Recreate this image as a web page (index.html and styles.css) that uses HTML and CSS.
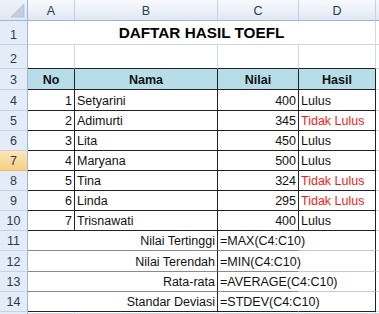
FILE: index.html
```html
<!DOCTYPE html>
<html>
<head>
<meta charset="utf-8">
<link rel="stylesheet" href="styles.css">
</head>
<body>
<div class="sheet">
  <!-- column headers -->
  <div class="corner"><svg width="27" height="20" viewBox="0 0 27 20"><polygon points="11,17 24,17 24,4" fill="#c3cfdf" stroke="#a9b9cf" stroke-width="0.6"/></svg></div>
  <div class="ch">A</div>
  <div class="ch">B</div>
  <div class="ch">C</div>
  <div class="ch">D</div>
  <div class="ch ch-x"></div>

  <!-- row 1 -->
  <div class="rh">1</div>
  <div class="c title">DAFTAR HASIL TOEFL</div>
  <div class="c x"></div>

  <!-- row 2 -->
  <div class="rh">2</div>
  <div class="c top"></div>
  <div class="c top"></div>
  <div class="c top"></div>
  <div class="c top t-r"></div>
  <div class="c x"></div>

  <!-- row 3 -->
  <div class="rh">3</div>
  <div class="c t th">No</div>
  <div class="c t th">Nama</div>
  <div class="c t th">Nilai</div>
  <div class="c t th">Hasil</div>
  <div class="c x"></div>

  <div class="rh">4</div>
  <div class="c t num">1</div>
  <div class="c t txt">Setyarini</div>
  <div class="c t num">400</div>
  <div class="c t txt">Lulus</div>
  <div class="c x"></div>

  <div class="rh">5</div>
  <div class="c t num">2</div>
  <div class="c t txt">Adimurti</div>
  <div class="c t num">345</div>
  <div class="c t txt fail">Tidak Lulus</div>
  <div class="c x"></div>

  <div class="rh">6</div>
  <div class="c t num">3</div>
  <div class="c t txt">Lita</div>
  <div class="c t num">450</div>
  <div class="c t txt">Lulus</div>
  <div class="c x"></div>

  <div class="rh rh-sel">7</div>
  <div class="c t num">4</div>
  <div class="c t txt">Maryana</div>
  <div class="c t num">500</div>
  <div class="c t txt">Lulus</div>
  <div class="c x"></div>

  <div class="rh">8</div>
  <div class="c t num">5</div>
  <div class="c t txt">Tina</div>
  <div class="c t num">324</div>
  <div class="c t txt fail">Tidak Lulus</div>
  <div class="c x"></div>

  <div class="rh">9</div>
  <div class="c t num">6</div>
  <div class="c t txt">Linda</div>
  <div class="c t num">295</div>
  <div class="c t txt fail">Tidak Lulus</div>
  <div class="c x"></div>

  <div class="rh">10</div>
  <div class="c t num">7</div>
  <div class="c t txt">Trisnawati</div>
  <div class="c t num">400</div>
  <div class="c t txt">Lulus</div>
  <div class="c x"></div>

  <div class="rh">11</div>
  <div class="c lab">Nilai Tertinggi</div>
  <div class="c fx">=MAX(C4:C10)</div>
  <div class="c fd"></div>
  <div class="c x"></div>

  <div class="rh">12</div>
  <div class="c lab">Nilai Terendah</div>
  <div class="c fx">=MIN(C4:C10)</div>
  <div class="c fd"></div>
  <div class="c x"></div>

  <div class="rh">13</div>
  <div class="c lab">Rata-rata</div>
  <div class="c fx">=AVERAGE(C4:C10)</div>
  <div class="c fd"></div>
  <div class="c x"></div>

  <div class="rh">14</div>
  <div class="c lab last">Standar Deviasi</div>
  <div class="c fx last">=STDEV(C4:C10)</div>
  <div class="c fd last"></div>
  <div class="c x"></div>

  <div class="rh rh-end"></div>
  <div class="c"></div>
  <div class="c"></div>
  <div class="c"></div>
  <div class="c"></div>
  <div class="c x"></div>
</div>
</body>
</html>
```

FILE: styles.css
```css
* { box-sizing: border-box; }
html, body { margin: 0; padding: 0; background: #fff; }
body {
  font-family: "Liberation Sans", Arial, sans-serif;
  font-size: 12.5px;
  color: #111;
  overflow: hidden;
}
.sheet {
  display: grid;
  grid-template-columns: 28px 47px 143px 81px 77px 1fr;
  grid-template-rows: 21px 24px 24px 21px 21px repeat(7, 20px) 21px 20px 20px 1fr;
  width: 379px;
  height: 314px;
}
.corner {
  background: linear-gradient(#eef3fa, #dfe7f2);
  border-right: 1px solid #9eb6ce;
  border-bottom: 1px solid #9eb6ce;
  display: flex;
}
.ch {
  background: linear-gradient(#f7f9fc 0%, #edf2f9 50%, #dfe7f2 100%);
  border-right: 1px solid #c5d2e3;
  border-bottom: 1px solid #9eb6ce;
  display: flex;
  align-items: center;
  justify-content: center;
  color: #2c3a4f;
  padding-top: 1px;
}
.ch-x { border-right: none; }
.rh {
  background: #e4ecf7;
  border-right: 1px solid #9eb6ce;
  border-bottom: 1px solid #c5d2e3;
  display: flex;
  align-items: flex-end;
  justify-content: center;
  line-height: 15px;
  padding-bottom: 1px;
  color: #2c3a4f;
}
.rh-sel {
  background: linear-gradient(#fde6b8, #f9cf87);
  border-bottom-color: #f0b45e;
}
.rh-end { border-bottom: none; }
.c {
  border-right: 1px solid #d0d7e5;
  border-bottom: 1px solid #d0d7e5;
  display: flex;
  align-items: flex-end;
  line-height: 15px;
  padding: 0 2px 1px;
  white-space: nowrap;
  background: #fff;
}
.x { border-right: none; }
.title {
  grid-column: span 4;
  justify-content: center;
  font-weight: bold;
  font-size: 15.3px;
  line-height: 18px;
  padding-bottom: 2px;
  color: #000;
}
.top { border-bottom-color: #222; }
.t { border-right-color: #222; border-bottom-color: #222; }
.th {
  background: #b7dee8;
  font-weight: bold;
  justify-content: center;
}
.num { justify-content: flex-end; }
.txt { justify-content: flex-start; }
.fail { color: #f21c1c; }
.lab {
  grid-column: span 2;
  justify-content: flex-end;
  border-right-color: #222;
  border-bottom-color: #8a8a8a;
}
.fx {
  border-right-color: transparent;
  border-bottom-color: #8a8a8a;
  overflow: visible;
  position: relative;
  z-index: 1;
  background: transparent;
}
.fd {
  border-right-color: #222;
  border-bottom-color: #c8c8c8;
  background: transparent;
}
.last { border-bottom-color: #222; }
```
